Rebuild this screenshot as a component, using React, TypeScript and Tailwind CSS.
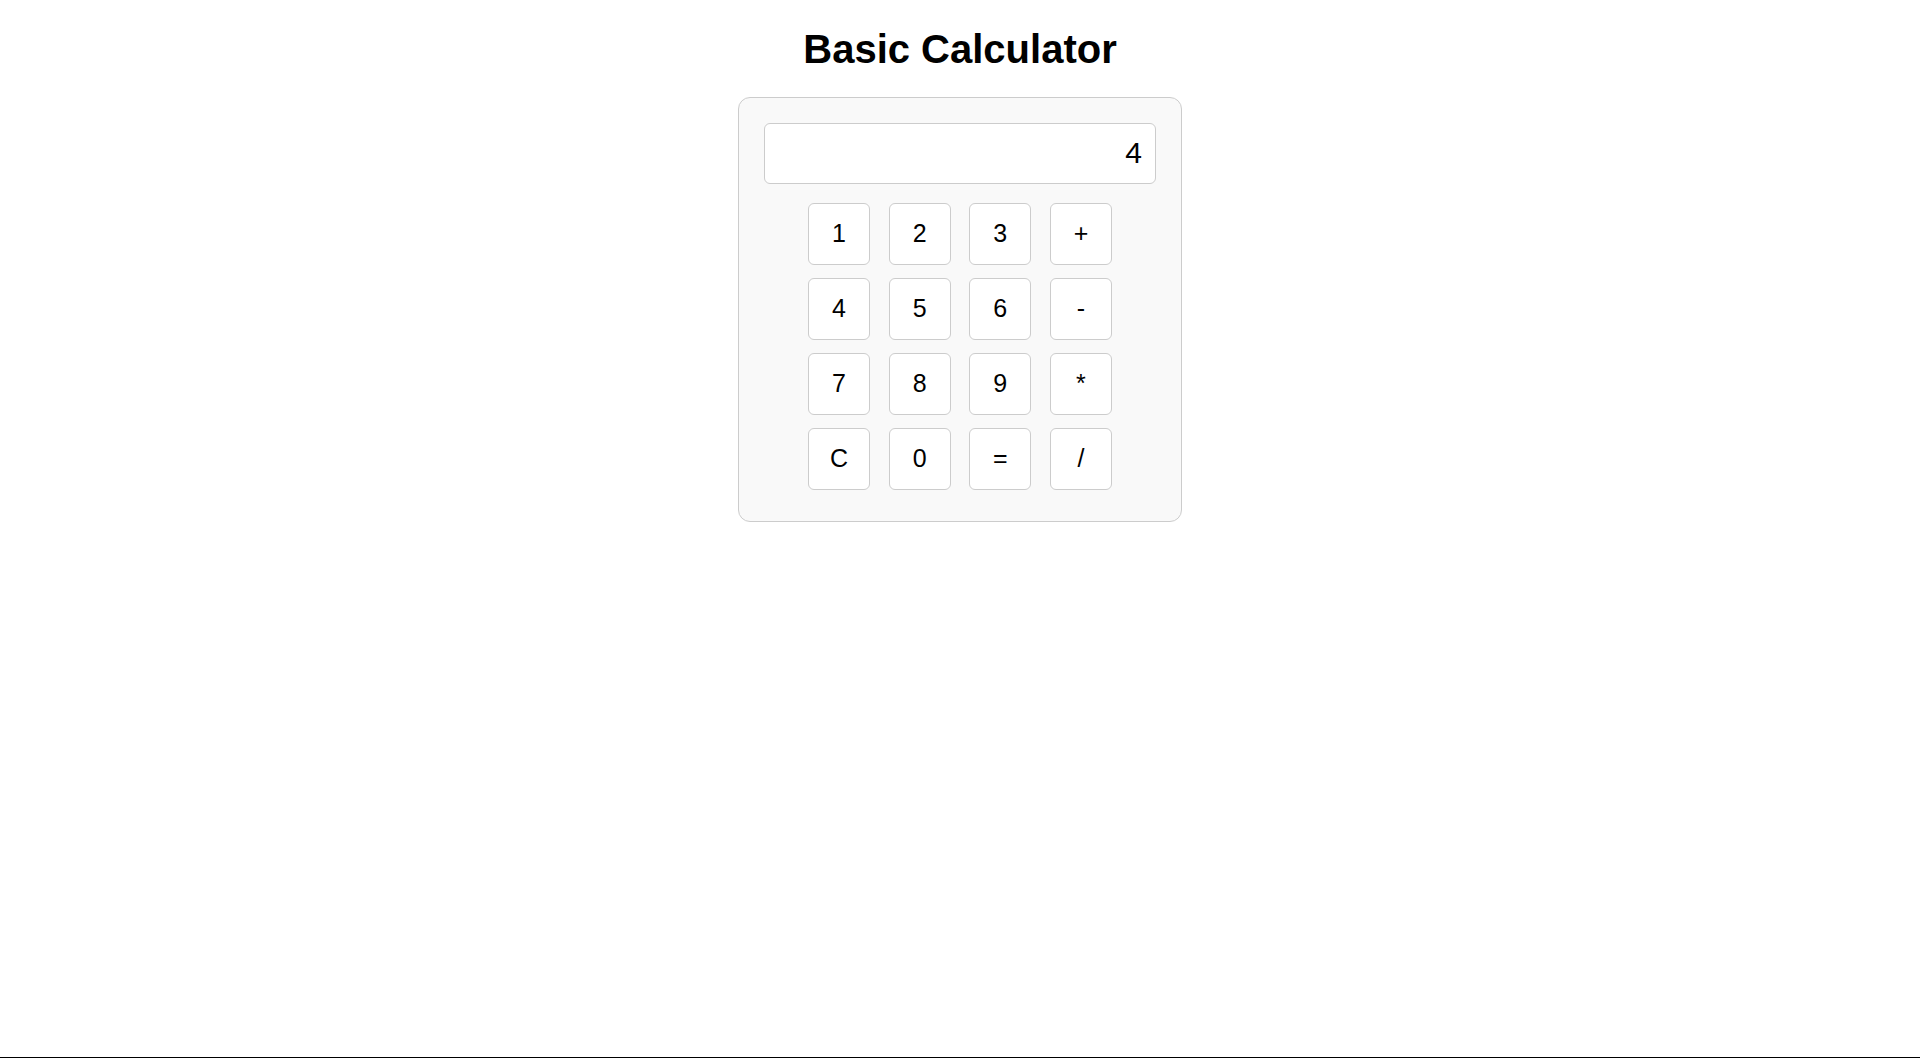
import { useState } from "react";

const keys = ["1", "2", "3", "+", "4", "5", "6", "-", "7", "8", "9", "*", "C", "0", "=", "/"];

export default function App() {
  const [value, setValue] = useState("4");

  return (
    <div className="flex min-h-screen flex-col border-b border-black bg-white font-['Liberation_Sans',Arial,sans-serif] text-black">
      <main className="flex flex-col items-center pt-[26px]">
        <h1 className="text-[40px] leading-[46px] font-bold">Basic Calculator</h1>
        <section
          aria-label="Calculator"
          className="mt-[25px] w-full max-w-[444px] rounded-xl border border-[#cccccc] bg-[#f9f9f9] p-[25px] pb-[31px]"
        >
          <input
            aria-label="Display"
            readOnly
            value={value}
            className="block h-[61px] w-full rounded-md border border-[#cccccc] bg-white px-[13px] pb-[2px] text-right text-[30px] outline-none"
          />
          <div className="mx-auto mt-[19px] grid w-[304px] grid-cols-[repeat(4,62px)] justify-between gap-y-[13px]">
            {keys.map((key) => (
              <button
                key={key}
                type="button"
                onClick={() => setValue(key === "C" ? "" : value + key)}
                className="h-[62px] rounded-md border border-[#cccccc] bg-white pb-[2px] text-[25px] leading-[30px] hover:bg-[#f0f0f0]"
              >
                {key}
              </button>
            ))}
          </div>
        </section>
      </main>
    </div>
  );
}
